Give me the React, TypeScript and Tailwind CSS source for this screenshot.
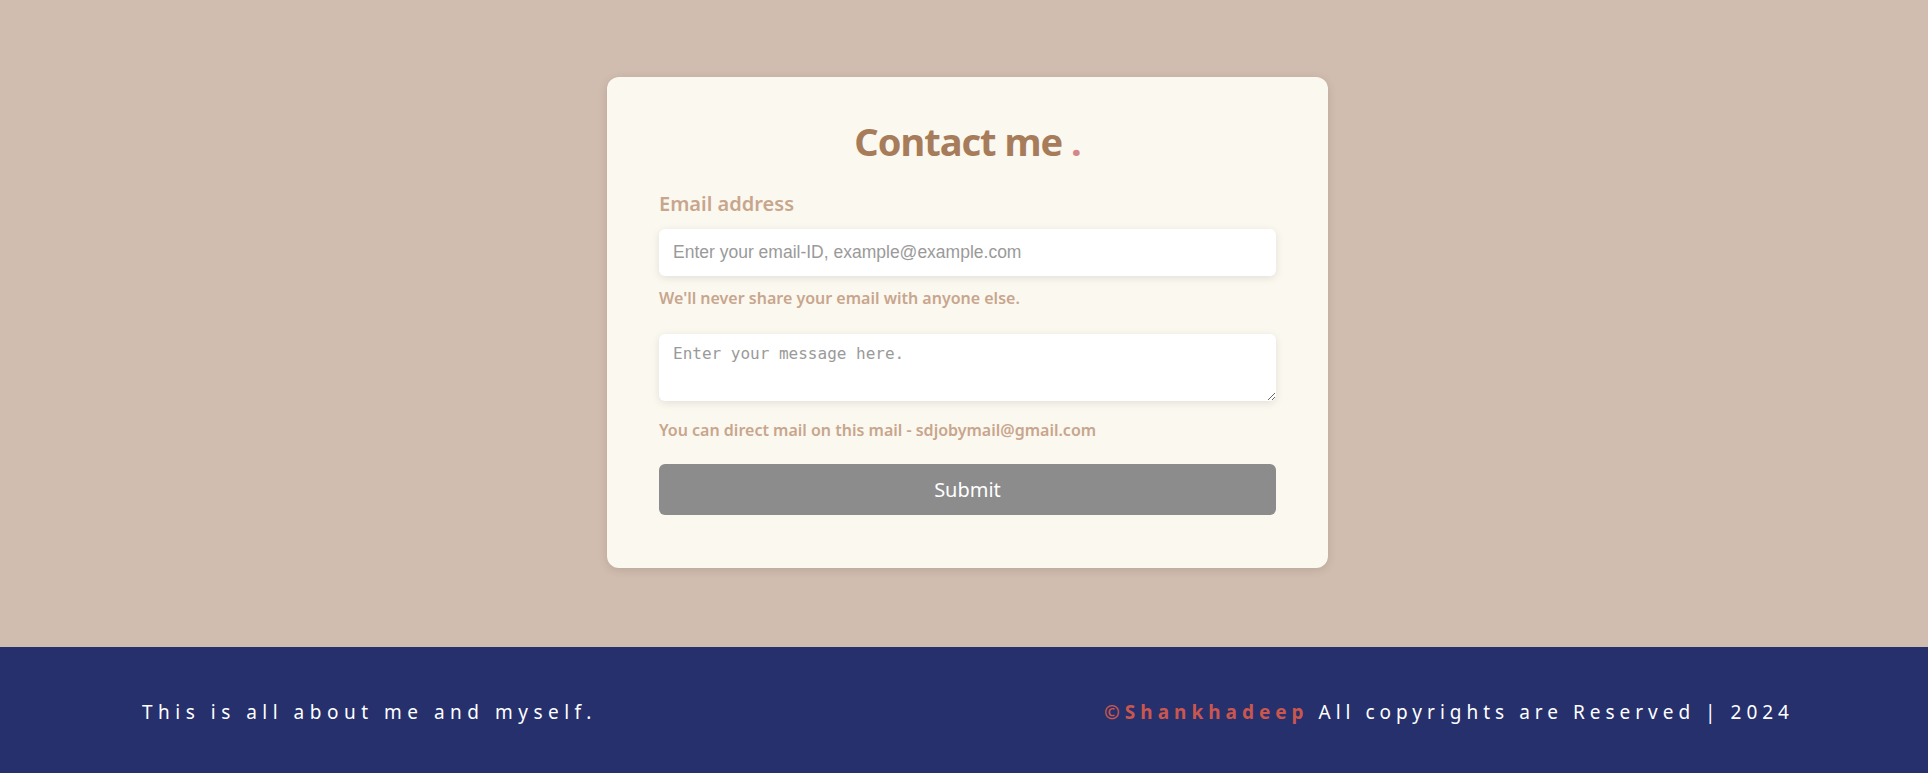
import React from "react"

const font = { fontFamily: '"Noto Sans", "Open Sans", sans-serif' }

export default function App() {
  return (
    <div className="min-h-screen flex flex-col bg-[#d1bdaf]" style={font}>
      <main className="h-[647px] flex justify-center pt-[77px] pl-[7px]">
        <div className="w-[721px] h-[491px] bg-[#fbf8f0] rounded-[12px] shadow-[0_2px_10px_rgba(0,0,0,0.12)] px-[52px] pt-[40px] pb-[53px] flex flex-col">
          <h1 className="text-center text-[38px] leading-[48px] font-bold text-[#a67c5b] tracking-[-1px]">
            Contact me <span className="text-[#d4868a]">.</span>
          </h1>
          <label className="mt-[25px] text-[20px] leading-[28px] font-semibold text-[#c8a68d]">
            Email address
          </label>
          <input
            type="email"
            placeholder="Enter your email-ID, example@example.com"
            className="mt-[11px] h-[47px] w-full bg-white rounded-[6px] px-[14px] text-[17.5px] shadow-[0_2px_8px_rgba(0,0,0,0.1)] outline-none placeholder:text-[#9a9a9a]"
            style={{ fontFamily: '"Liberation Sans", Arial, sans-serif' }}
          />
          <p className="mt-[12px] text-[16px] leading-[20px] font-semibold text-[#c8a68d]">
            We'll never share your email with anyone else.
          </p>
          <textarea
            placeholder="Enter your message here."
            className="mt-[26px] h-[67px] w-full bg-white rounded-[6px] px-[14px] py-[10px] text-[16px] leading-[20px] shadow-[0_2px_8px_rgba(0,0,0,0.1)] outline-none placeholder:text-[#9a9a9a]"
            style={{ fontFamily: '"DejaVu Sans Mono", monospace' }}
          />
          <p className="mt-[19px] text-[16px] leading-[20px] font-semibold text-[#c8a68d]">
            You can direct mail on this mail - sdjobymail@gmail.com
          </p>
          <button className="mt-[24px] h-[51px] w-full rounded-[6px] bg-[#8c8c8c] text-white text-[20px]">
            Submit
          </button>
        </div>
      </main>
      <footer className="h-[126px] bg-[#25306c] flex items-center justify-between pl-[142px] pr-[134px] pt-[4px] text-white text-[19px]">
        <span className="tracking-[5.5px]">This is all about me and myself.</span>
        <span className="tracking-[5px]">
          <span className="text-[#c9574f] font-bold">©Shankhadeep</span> All copyrights are Reserved | 2024
        </span>
      </footer>
    </div>
  )
}
